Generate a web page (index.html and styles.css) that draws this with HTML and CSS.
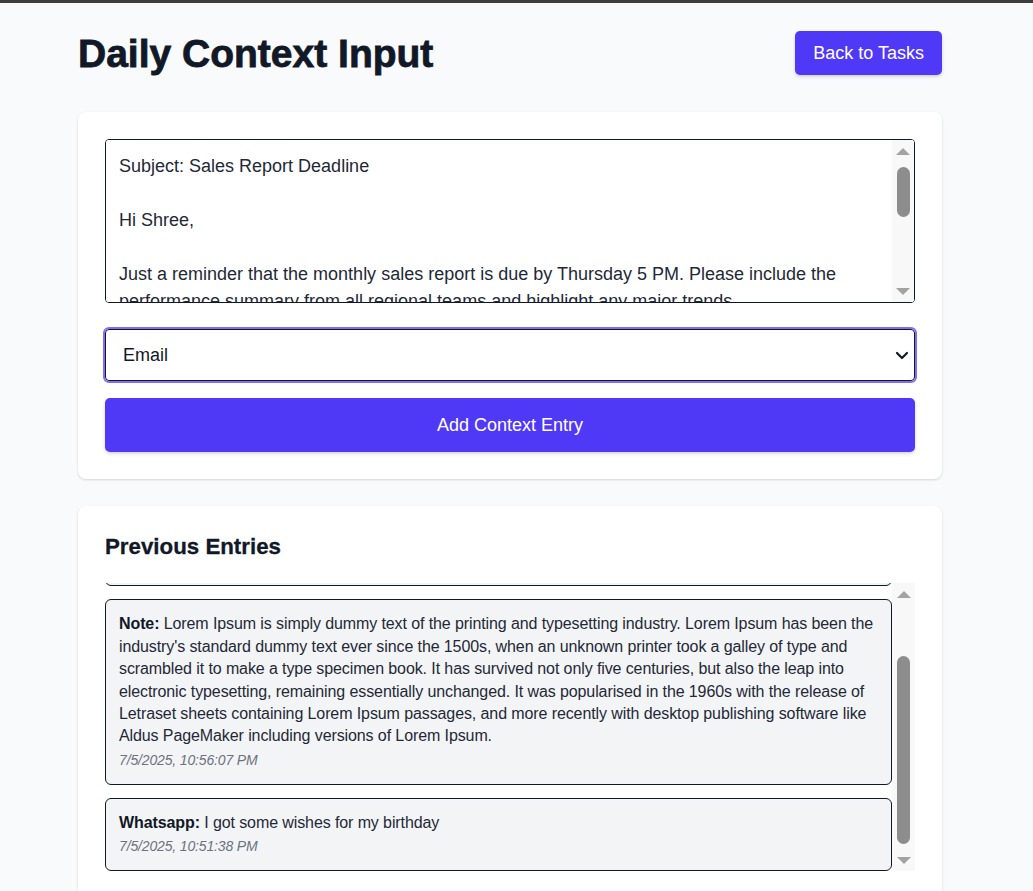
FILE: index.html
```html
<!DOCTYPE html>
<html lang="en">
<head>
<meta charset="utf-8">
<title>Daily Context Input</title>
<link rel="stylesheet" href="styles.css">
<script src="script.js" defer></script>
</head>
<body>
<div class="topbar"></div>
<main class="page">
  <header class="page-header">
    <h1 class="title">Daily Context Input</h1>
    <button class="btn btn-back" type="button">Back to Tasks</button>
  </header>

  <section class="card card-input">
    <div class="scroll-frame textarea-frame">
      <textarea class="context-text" id="context" rows="5">Subject: Sales Report Deadline

Hi Shree,

Just a reminder that the monthly sales report is due by Thursday 5 PM. Please include the performance summary from all regional teams and highlight any major trends.

Let me know if you need any additional data or support from the analytics team.

Best regards,
Priya
Sales Manager</textarea>
      <div class="fake-scrollbar sb-textarea" data-for="context" aria-hidden="true">
        <span class="sb-btn"><span class="sb-arrow sb-up"></span></span>
        <span class="sb-track"><span class="sb-thumb"></span></span>
        <span class="sb-btn"><span class="sb-arrow sb-down"></span></span>
      </div>
    </div>
    <div class="select-wrap">
      <select class="type-select">
        <option>Email</option>
        <option>Whatsapp</option>
        <option>Note</option>
        <option>Meeting</option>
      </select>
      <svg class="chevron" width="14" height="9" viewBox="0 0 14 9" aria-hidden="true">
        <path d="M2 2 L7 7 L12 2" fill="none" stroke="#111827" stroke-width="2.2" stroke-linecap="round" stroke-linejoin="round"/>
      </svg>
    </div>
    <button class="btn btn-add" type="button">Add Context Entry</button>
  </section>

  <section class="card card-entries">
    <h2 class="entries-title">Previous Entries</h2>
    <div class="scroll-frame entries-frame">
      <div class="entries-list" id="entries">
        <article class="entry">
          <p class="entry-text"><strong>Meeting:</strong> Quarterly planning sync moved to Friday morning</p>
          <p class="entry-time">7/5/2025, 11:02:15 PM</p>
        </article>
        <article class="entry">
          <p class="entry-text"><strong>Note:</strong> Lorem Ipsum is simply dummy text of the printing and typesetting industry. Lorem Ipsum has been the industry's standard dummy text ever since the 1500s, when an unknown printer took a galley of type and scrambled it to make a type specimen book. It has survived not only five centuries, but also the leap into electronic typesetting, remaining essentially unchanged. It was popularised in the 1960s with the release of Letraset sheets containing Lorem Ipsum passages, and more recently with desktop publishing software like Aldus PageMaker including versions of Lorem Ipsum.</p>
          <p class="entry-time">7/5/2025, 10:56:07 PM</p>
        </article>
        <article class="entry">
          <p class="entry-text"><strong>Whatsapp:</strong> I got some wishes for my birthday</p>
          <p class="entry-time">7/5/2025, 10:51:38 PM</p>
        </article>
      </div>
      <div class="fake-scrollbar sb-entries" data-for="entries" aria-hidden="true">
        <span class="sb-btn"><span class="sb-arrow sb-up"></span></span>
        <span class="sb-track"><span class="sb-thumb"></span></span>
        <span class="sb-btn"><span class="sb-arrow sb-down"></span></span>
      </div>
    </div>
  </section>
</main>
</body>
</html>
```

FILE: styles.css
```css
* {
  box-sizing: border-box;
}

html {
  scrollbar-width: none;
}

body {
  margin: 0;
  background: #f9fafb;
  font-family: "Liberation Sans", Arial, sans-serif;
  color: #111827;
}

.topbar {
  height: 3px;
  background: #3d3d3d;
}

.page {
  width: 864px;
  margin-left: 78px;
  padding-top: 28px;
  padding-bottom: 40px;
}

.page-header {
  display: flex;
  justify-content: space-between;
  align-items: flex-start;
  margin-bottom: 36px;
}

.title {
  margin: 1px 0 0;
  font-size: 39px;
  line-height: 44px;
  font-weight: 700;
  color: #111827;
  -webkit-text-stroke: 0.8px #111827;
}

.btn {
  border: 0;
  border-radius: 5px;
  background: #4f39f6;
  color: #ffffff;
  font-family: "Liberation Sans", Arial, sans-serif;
  font-size: 18px;
  cursor: pointer;
  box-shadow: 0 2px 4px rgba(0, 0, 0, 0.12), 0 1px 2px rgba(0, 0, 0, 0.08);
}

.btn-back {
  height: 44px;
  padding: 0 18px;
}

.card {
  background: #ffffff;
  border-radius: 8px;
  padding: 27px;
  box-shadow: 0 1px 3px rgba(0, 0, 0, 0.1), 0 1px 2px rgba(0, 0, 0, 0.06);
}

.card-input {
  display: flex;
  flex-direction: column;
  margin-bottom: 27px;
}

/* scroll frames with a drawn classic scrollbar */
.scroll-frame {
  position: relative;
}

.fake-scrollbar {
  position: absolute;
  display: flex;
  flex-direction: column;
  background: #f8f8f8;
}

.sb-btn {
  flex: 0 0 22px;
  display: flex;
  align-items: center;
  justify-content: center;
}

.sb-arrow {
  width: 0;
  height: 0;
  border-left: 7px solid transparent;
  border-right: 7px solid transparent;
}

.sb-up {
  border-bottom: 7px solid #a3a3a3;
}

.sb-down {
  border-top: 7px solid #a3a3a3;
}

.sb-track {
  flex: 1 1 auto;
  padding: 5px 0;
  overflow: hidden;
}

.sb-thumb {
  display: block;
  width: 13px;
  height: 50px;
  margin: 0 auto;
  border-radius: 7px;
  background: #8d8d8d;
}

.textarea-frame {
  margin-bottom: 26px;
}

.sb-textarea {
  top: 1px;
  right: 1px;
  bottom: 1px;
  width: 22px;
  border-radius: 0 3px 3px 0;
}

.context-text {
  display: block;
  width: 100%;
  height: 164px;
  margin: 0;
  padding: 13px 35px 13px 13px;
  border: 1px solid #111827;
  border-radius: 4px;
  font-family: "Liberation Sans", Arial, sans-serif;
  font-size: 18px;
  line-height: 27px;
  color: #1f2937;
  resize: none;
  outline: none;
  scrollbar-width: none;
}

.select-wrap {
  position: relative;
  margin-bottom: 17px;
}

.type-select {
  display: block;
  width: 100%;
  height: 52px;
  padding: 0 40px 0 17px;
  appearance: none;
  -webkit-appearance: none;
  border: 1px solid #111827;
  border-radius: 4px;
  background: #ffffff;
  font-family: "Liberation Sans", Arial, sans-serif;
  font-size: 18px;
  color: #111827;
  outline: 2px solid rgba(92, 74, 247, 0.8);
  outline-offset: 0;
}

.chevron {
  position: absolute;
  right: 6px;
  top: 22px;
  pointer-events: none;
}

.btn-add {
  width: 100%;
  height: 54px;
}

.entries-title {
  margin: 0 0 22px;
  font-size: 22.3px;
  line-height: 28px;
  font-weight: 700;
  color: #111827;
  -webkit-text-stroke: 0.3px #111827;
}

.entries-list {
  display: flex;
  flex-direction: column;
  gap: 13px;
  max-height: 288px;
  overflow-y: auto;
  padding-right: 23px;
  scrollbar-width: none;
}

.sb-entries {
  top: 0;
  right: 0;
  bottom: 0;
  width: 23px;
}

.entry {
  flex-shrink: 0;
  background: #f3f4f6;
  border: 1px solid #111827;
  border-radius: 6px;
  padding: 13px 13px 14px;
}

.entry-text {
  margin: 0;
  font-size: 16px;
  line-height: 22.4px;
  letter-spacing: -0.1px;
  color: #1f2937;
}

.entry-text strong {
  color: #111827;
}

.entry-time {
  margin: 2px 0 0;
  font-size: 14px;
  line-height: 20px;
  letter-spacing: -0.15px;
  font-style: italic;
  color: #6b7280;
}
```

FILE: script.js
```js
(function () {
  var INSET = 5;

  function syncBar(bar) {
    var scroller = document.getElementById(bar.getAttribute('data-for'));
    var track = bar.querySelector('.sb-track');
    var thumb = bar.querySelector('.sb-thumb');
    if (!scroller || !track || !thumb) {
      return;
    }
    var avail = track.clientHeight - INSET * 2;
    var ratio = scroller.clientHeight / scroller.scrollHeight;
    var len = Math.max(20, Math.round(avail * ratio));
    var max = scroller.scrollHeight - scroller.clientHeight;
    var pos = max > 0 ? Math.round((avail - len) * scroller.scrollTop / max) : 0;
    thumb.style.height = len + 'px';
    thumb.style.transform = 'translateY(' + pos + 'px)';
  }

  var list = document.getElementById('entries');
  if (list) {
    list.scrollTop = list.scrollHeight;
  }

  var bars = document.querySelectorAll('.fake-scrollbar');
  for (var i = 0; i < bars.length; i++) {
    syncBar(bars[i]);
  }
})();
```
